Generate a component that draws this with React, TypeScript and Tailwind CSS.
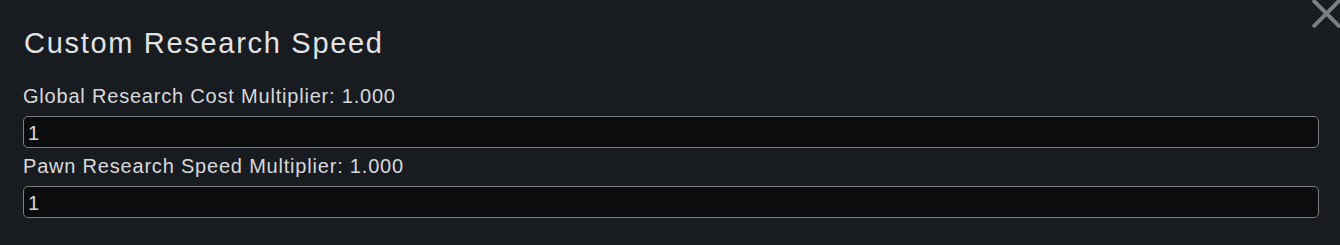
import React from 'react';

const Field: React.FC<{ label: string; value: string }> = ({ label, value }) => (
  <div className="flex flex-col">
    <label className="text-[20px] leading-[24px] tracking-[0.8px] text-[#d8d9da]">{label}</label>
    <input
      defaultValue={value}
      className="mt-2 h-[32px] w-full rounded-[5px] border border-[#7d7e80] bg-[#0b0c0e] px-[4px] pt-[2px] text-[20px] leading-[24px] text-[#d8d9da] outline-none"
    />
  </div>
);

export default function App() {
  return (
    <div
      className="relative h-[245px] w-[1340px] overflow-hidden bg-[#181b20] pl-[23px] pr-[21px] pt-[26px]"
      style={{ fontFamily: '"Liberation Sans", Arial, sans-serif' }}
    >
      <svg className="absolute right-0 top-0" width="28" height="28" viewBox="0 0 28 28">
        <path d="M1 0 L28 27 M28 0 L1 27" stroke="#7c7f83" strokeWidth="4" fill="none" />
      </svg>
      <h1 className="pl-px text-[29px] leading-[34px] tracking-[1.7px] text-[#e2e3e4]">Custom Research Speed</h1>
      <div className="mt-[24px] flex flex-col gap-[6px]">
        <Field label="Global Research Cost Multiplier: 1.000" value="1" />
        <Field label="Pawn Research Speed Multiplier: 1.000" value="1" />
      </div>
    </div>
  );
}
